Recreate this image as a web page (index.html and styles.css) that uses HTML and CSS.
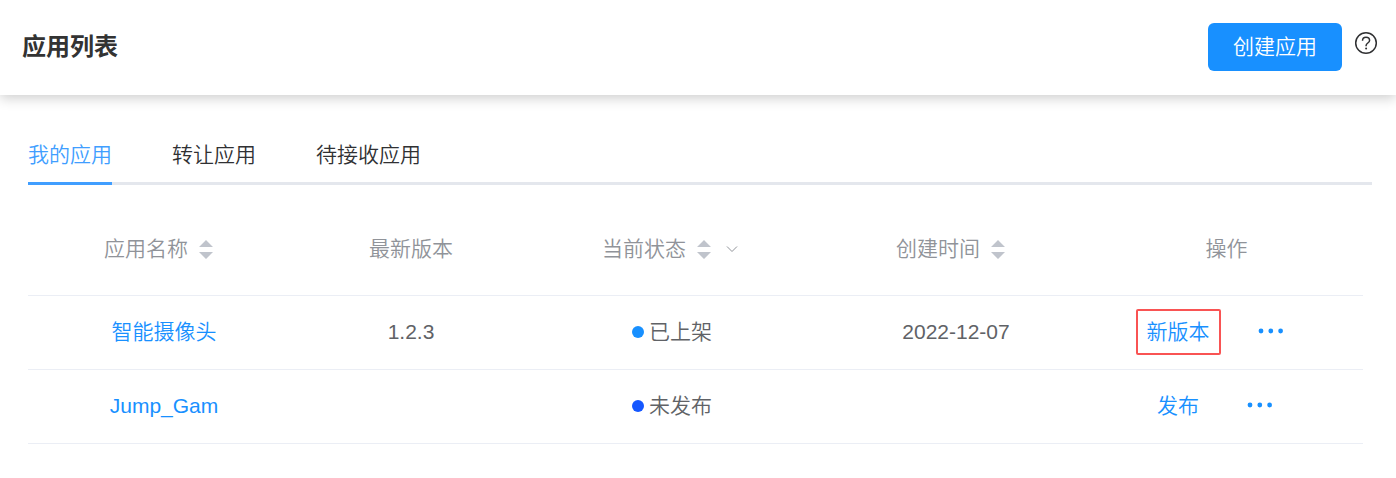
FILE: index.html
```
<!DOCTYPE html>
<html lang="zh-CN">

<head>
    <meta charset="UTF-8">
    <meta name="viewport" content="width=device-width, initial-scale=1.0">
    <title>应用列表</title>
    <link rel="stylesheet" href="styles.css">
</head>

<body>
    <header class="page-header">
        <h1>应用列表</h1>
        <div class="header-actions">
            <button type="button" class="btn-create">创建应用</button>
            <button type="button" class="btn-help" aria-label="帮助">
                <svg width="24" height="24" viewBox="0 0 24 24" fill="none" stroke="currentColor" stroke-width="1.5">
                    <circle cx="12" cy="12" r="10.3" />
                    <path d="M8.500 9.800c0-2 1.500-3.500 3.500-3.500s3.600 1.300 3.600 3.200c0 2.400-3.500 2.600-3.500 4.900v.800" />
                    <circle cx="12.100" cy="17.600" r="1" fill="currentColor" stroke="none" />
                </svg>
            </button>
        </div>
    </header>

    <main class="content">
        <nav class="tabs">
            <a href="#" class="tab active">我的应用</a>
            <a href="#" class="tab">转让应用</a>
            <a href="#" class="tab">待接收应用</a>
        </nav>

        <table class="app-table">
            <colgroup>
                <col class="col-name">
                <col class="col-version">
                <col class="col-status">
                <col class="col-time">
                <col class="col-action">
            </colgroup>
            <thead>
                <tr>
                    <th>
                        <div class="cell">应用名称
                            <button type="button" class="sort" aria-label="按应用名称排序">
                                <svg width="14" height="20" viewBox="0 0 14 20" fill="currentColor"><path d="M0 8L7 1L14 8zM0 13H14L7 20z" /></svg>
                            </button>
                        </div>
                    </th>
                    <th>最新版本</th>
                    <th>
                        <div class="cell">当前状态
                            <button type="button" class="sort" aria-label="按当前状态排序">
                                <svg width="14" height="20" viewBox="0 0 14 20" fill="currentColor"><path d="M0 8L7 1L14 8zM0 13H14L7 20z" /></svg>
                            </button>
                            <button type="button" class="filter" aria-label="筛选状态">
                                <svg width="12" height="8" viewBox="0 0 12 8" fill="none" stroke="currentColor"><path d="M1 1.500L6 6.500L11 1.500" /></svg>
                            </button>
                        </div>
                    </th>
                    <th>
                        <div class="cell">创建时间
                            <button type="button" class="sort" aria-label="按创建时间排序">
                                <svg width="14" height="20" viewBox="0 0 14 20" fill="currentColor"><path d="M0 8L7 1L14 8zM0 13H14L7 20z" /></svg>
                            </button>
                        </div>
                    </th>
                    <th>操作</th>
                </tr>
            </thead>
            <tbody>
                <tr>
                    <td><a href="#">智能摄像头</a></td>
                    <td>1.2.3</td>
                    <td>
                        <div class="cell status"><span class="dot online"></span>已上架</div>
                    </td>
                    <td>2022-12-07</td>
                    <td>
                        <div class="cell actions">
                            <button type="button" class="btn-text marked">新版本</button>
                            <button type="button" class="btn-more" aria-label="更多">
                                <svg width="26" height="8" viewBox="0 0 26 8" fill="currentColor"><circle cx="3" cy="3" r="2.400" /><circle cx="12.800" cy="3" r="2.400" /><circle cx="22.600" cy="3" r="2.400" /></svg>
                            </button>
                        </div>
                    </td>
                </tr>
                <tr>
                    <td><a href="#">Jump_Gam</a></td>
                    <td></td>
                    <td>
                        <div class="cell status"><span class="dot draft"></span>未发布</div>
                    </td>
                    <td></td>
                    <td>
                        <div class="cell actions">
                            <button type="button" class="btn-text">发布</button>
                            <button type="button" class="btn-more" aria-label="更多">
                                <svg width="26" height="8" viewBox="0 0 26 8" fill="currentColor"><circle cx="3" cy="3" r="2.400" /><circle cx="12.800" cy="3" r="2.400" /><circle cx="22.600" cy="3" r="2.400" /></svg>
                            </button>
                        </div>
                    </td>
                </tr>
            </tbody>
        </table>
    </main>
</body>

</html>
```
FILE: styles.css
```
:root {
    --primary: #1890ff;
    --tab-active: #409eff;
    --text: #303133;
    --text-regular: #606266;
    --text-light: #909399;
    --caret: #c0c4cc;
    --line: #ebeef5;
}

* {
    margin: 0;
    padding: 0;
    box-sizing: border-box;
}

body {
    background-color: #fff;
    color: var(--text);
    font-family: "Liberation Sans", "Noto Sans CJK SC", sans-serif;
    font-size: 21px;
    font-weight: 350;
    line-height: 32px;
}

button {
    border: none;
    background: none;
    font: inherit;
    color: inherit;
    cursor: pointer;
}

a {
    color: var(--primary);
    text-decoration: none;
}

svg {
    display: block;
}

/* 顶部栏 */

.page-header {
    display: flex;
    justify-content: space-between;
    align-items: center;
    padding: 23px 18px 24px 22px;
    box-shadow: 0 3px 12px rgba(0, 0, 0, 0.2);
}

.page-header h1 {
    font-size: 24px;
    font-weight: 700;
    color: #333;
}

.header-actions {
    display: flex;
    gap: 12px;
}

.btn-create {
    height: 48px;
    padding: 0 25px;
    border-radius: 6px;
    background-color: var(--primary);
    color: #fff;
}

.btn-help {
    height: 40px;
}

/* 标签页 */

.content {
    padding: 40px 24px 0 28px;
}

.tabs {
    display: flex;
    gap: 60px;
    box-shadow: inset 0 -3px #e4e7ed;
}

.tab {
    padding: 4px 0 11px;
    border-bottom: 3px solid transparent;
    color: var(--text);
}

.tab.active {
    border-bottom-color: var(--tab-active);
    color: var(--tab-active);
}

/* 应用表格 */

.app-table {
    width: calc(100% - 9px);
    margin-top: 18px;
    table-layout: fixed;
    border-collapse: collapse;
    color: var(--text-regular);
}

/* 列宽按比例分配 */

.col-name {
    width: 272px;
}

.col-version {
    width: 222px;
}

.col-status {
    width: 300px;
}

.col-time {
    width: 268px;
}

.col-action {
    width: 273px;
}

.app-table th,
.app-table td {
    height: 74px;
    border-bottom: 1px solid var(--line);
    text-align: center;
    font-weight: 350;
}

.app-table th {
    height: 92px;
    color: var(--text-light);
}

.cell {
    display: flex;
    justify-content: center;
    align-items: center;
}

.sort {
    padding: 0 11px;
    color: var(--caret);
}

.filter {
    padding: 0 4px;
}

.status {
    gap: 5px;
}

.dot {
    width: 12px;
    height: 12px;
    border-radius: 50%;
}

.dot.online {
    background-color: var(--primary);
}

.dot.draft {
    background-color: #1557ff;
}

.actions {
    gap: 37px;
    padding-right: 34px;
    color: var(--primary);
}

.btn-text {
    padding: 5px 9px;
    border: 2px solid transparent;
}

.btn-text.marked {
    border-color: #f95353;
    border-radius: 2px;
}
```
